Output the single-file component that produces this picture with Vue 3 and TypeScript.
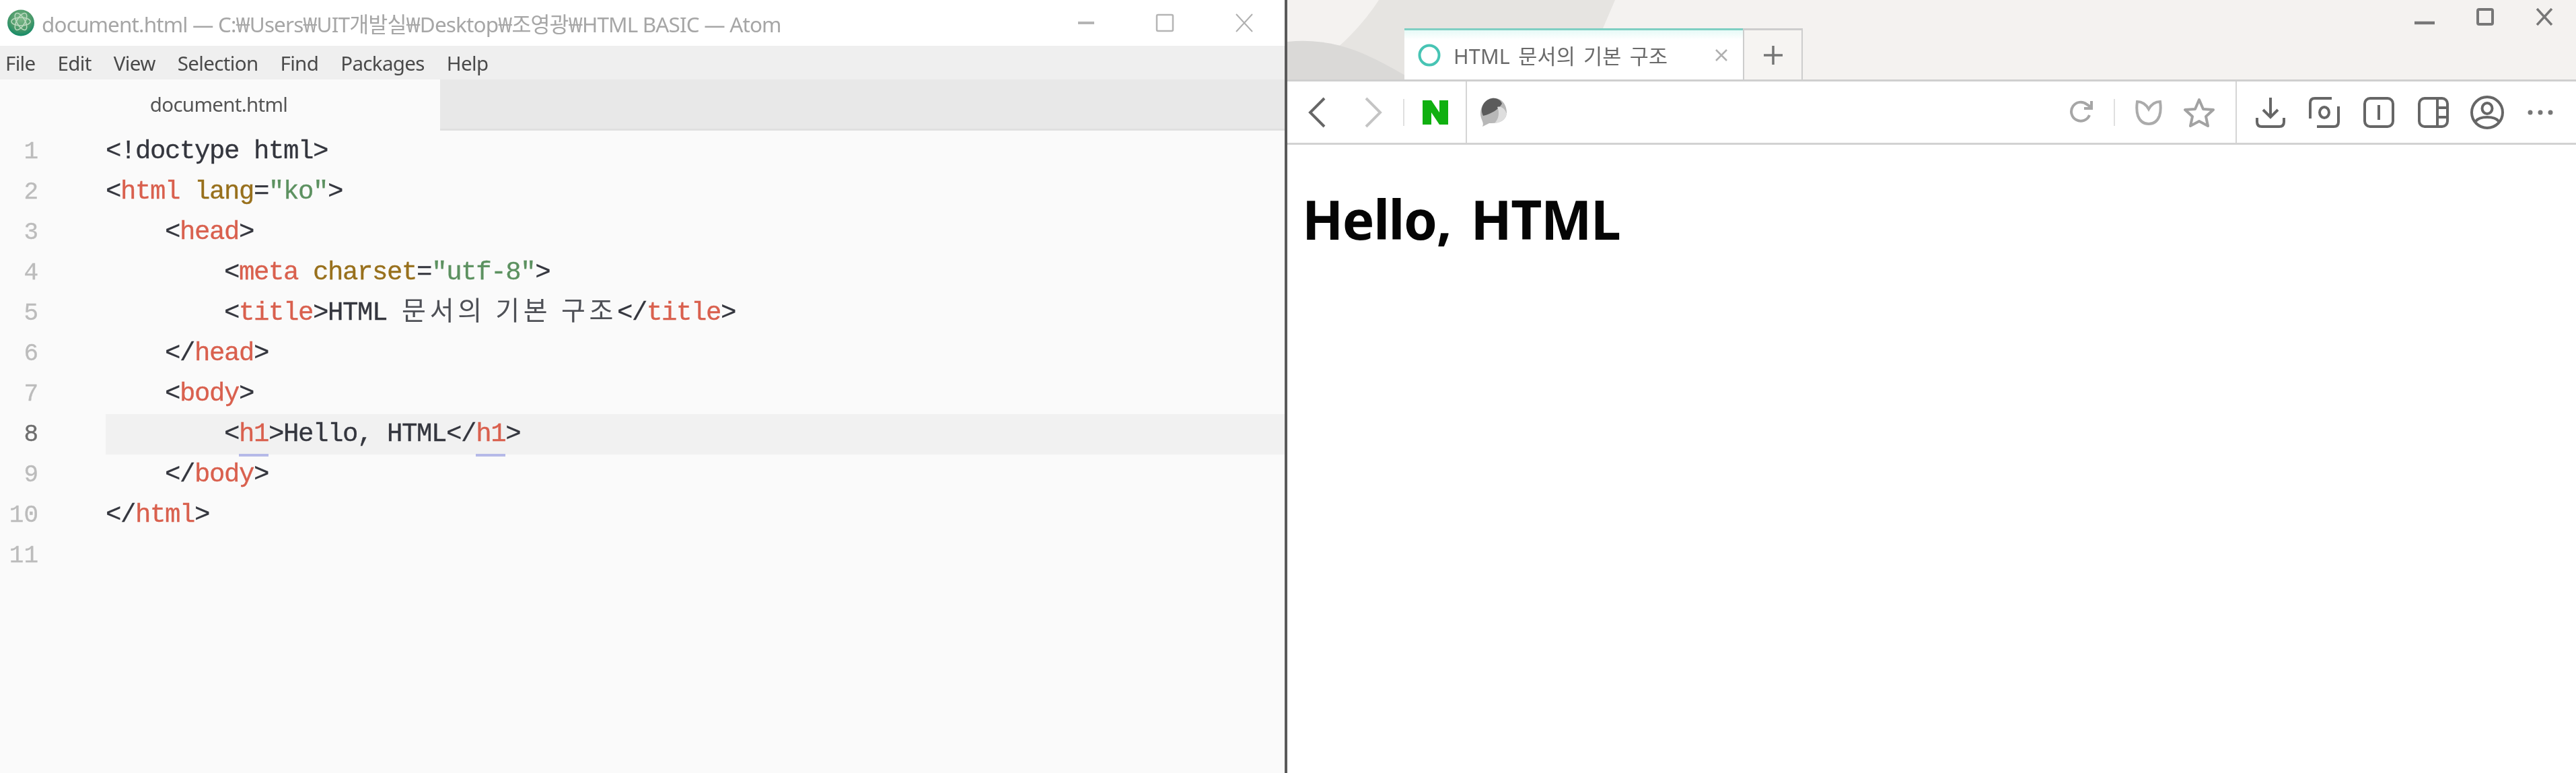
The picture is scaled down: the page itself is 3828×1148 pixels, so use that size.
<script setup lang="ts">
type Tok = { t: string; c?: string };
const tag = (t: string): Tok => ({ t, c: 'tag' });
const attr = (t: string): Tok => ({ t, c: 'attr' });
const str = (t: string): Tok => ({ t, c: 'str' });
const p = (t: string): Tok => ({ t });
const ko = (t: string): Tok => ({ t, c: 'ko' });
const u = (t: string): Tok => ({ t, c: 'tag under' });

const lines: Tok[][] = [
  [p('<!doctype html>')],
  [p('<'), tag('html'), p(' '), attr('lang'), p('='), str('"ko"'), p('>')],
  [p('    <'), tag('head'), p('>')],
  [p('        <'), tag('meta'), p(' '), attr('charset'), p('='), str('"utf-8"'), p('>')],
  [p('        <'), tag('title'), p('>HTML '), ko('문서의 기본 구조'), p('</'), tag('title'), p('>')],
  [p('    </'), tag('head'), p('>')],
  [p('    <'), tag('body'), p('>')],
  [p('        <'), u('h1'), p('>Hello, HTML</'), u('h1'), p('>')],
  [p('    </'), tag('body'), p('>')],
  [p('</'), tag('html'), p('>')],
  [],
];
const menus = ['File', 'Edit', 'View', 'Selection', 'Find', 'Packages', 'Help'];
</script>

<template>
  <div class="screen">
    <section class="atom">
      <header class="a-title">
        <svg class="a-logo" width="42" height="40" viewBox="0 0 42 40">
          <defs>
            <radialGradient id="g" cx="50%" cy="35%" r="65%">
              <stop offset="0" stop-color="#7fb98a" />
              <stop offset="0.6" stop-color="#4d9a6a" />
              <stop offset="1" stop-color="#128a68" />
            </radialGradient>
          </defs>
          <ellipse cx="21" cy="20" rx="20" ry="19.5" fill="url(#g)" />
          <g fill="none" stroke="#b9d8bd" stroke-width="1.6">
            <ellipse cx="21" cy="18" rx="14" ry="6" />
            <ellipse cx="21" cy="18" rx="14" ry="6" transform="rotate(60 21 18)" />
            <ellipse cx="21" cy="18" rx="14" ry="6" transform="rotate(120 21 18)" />
          </g>
        </svg>
        <span class="a-title-text">document.html — C:₩Users₩UIT개발실₩Desktop₩조영광₩HTML BASIC — Atom</span>
        <div class="a-win">
          <svg width="26" height="6" viewBox="0 0 26 6"><path d="M1 3H25" stroke="#b5b5b5" stroke-width="4" /></svg>
          <svg width="28" height="28" viewBox="0 0 28 28"><rect x="2" y="2" width="24" height="24" rx="2" fill="none" stroke="#b5b5b5" stroke-width="2.5" /></svg>
          <svg width="28" height="28" viewBox="0 0 28 28"><path d="M2 1L26 27M26 1L2 27" stroke="#b0b0b0" stroke-width="2" fill="none" /></svg>
        </div>
      </header>
      <nav class="a-menu">
        <span v-for="m in menus" :key="m">{{ m }}</span>
      </nav>
      <div class="a-tabs">
        <div class="a-tab">document.html</div>
      </div>
      <div class="a-editor">
        <div v-for="(line, i) in lines" :key="i" class="row" :class="{ current: i === 7 }">
          <div class="num">{{ i + 1 }}</div>
          <div class="code"><span v-for="(tk, j) in line" :key="j" :class="tk.c">{{ tk.t }}</span></div>
        </div>
      </div>
    </section>

    <section class="browser">
      <div class="b-top">
        <svg class="decor" width="1916" height="118" viewBox="0 0 1916 118" preserveAspectRatio="none">
          <path d="M136 0H487L469 42H175V118H14C70 80 110 40 136 0Z" fill="#e6e4e1" />
          <path d="M0 62C70 55 120 80 175 112V118H0Z" fill="#dad9d7" />
        </svg>
        <div class="b-tab">
          <svg width="36" height="36" viewBox="0 0 36 36"><circle cx="18" cy="18" r="14.5" fill="none" stroke="#47c4b4" stroke-width="4" /></svg>
          <span class="b-tab-text">HTML 문서의 기본 구조</span>
          <svg class="b-tab-x" width="22" height="22" viewBox="0 0 22 22"><path d="M3 3L19 19M19 3L3 19" stroke="#b0b0b0" stroke-width="2.5" /></svg>
        </div>
        <div class="b-new">
          <svg width="32" height="32" viewBox="0 0 32 32"><path d="M16 2V30M2 16H30" stroke="#757575" stroke-width="3.5" /></svg>
        </div>
        <div class="b-win">
          <svg width="30" height="8" viewBox="0 0 30 8"><path d="M0 4H30" stroke="#777" stroke-width="4.5" /></svg>
          <svg width="26" height="26" viewBox="0 0 26 26"><rect x="2" y="2" width="22" height="22" rx="2" fill="none" stroke="#777" stroke-width="4" /></svg>
          <svg width="26" height="26" viewBox="0 0 26 26"><path d="M2 1L24 25M24 1L2 25" stroke="#777" stroke-width="3.5" /></svg>
        </div>
      </div>

      <div class="b-bar">
        <div class="b-nav">
          <svg width="26" height="46" viewBox="0 0 26 46"><path d="M24 2L3 23L24 44" fill="none" stroke="#666" stroke-width="4" /></svg>
          <svg class="fwd" width="26" height="46" viewBox="0 0 26 46"><path d="M2 2L23 23L2 44" fill="none" stroke="#c4c4c4" stroke-width="4" /></svg>
          <i class="sep"></i>
          <svg class="naver" width="38" height="36" viewBox="0 0 38 36"><path d="M0 0H13L25 18V0H38V36H25L13 18V36H0Z" fill="#10b010" /></svg>
        </div>
        <div class="b-addr">
          <svg width="42" height="44" viewBox="0 0 42 44">
            <path d="M18 1C32 -1 40 10 40 22C40 33 30 39 14 38L4 43C6 38 4 36 2 30C-2 18 6 3 18 1Z" fill="#b8b8b8" />
            <path d="M18 1C26 0 31 4 33 9C28 17 18 24 5 27C-1 16 6 3 18 1Z" fill="#5b5b5b" />
            <path d="M26 14C33 12 38 18 40 24C38 34 28 38 22 38C28 32 30 22 26 14Z" fill="#dedede" />
          </svg>
          <div class="b-addr-end">
            <svg width="36" height="36" viewBox="0 0 36 36"><path d="M30 22A14 14 0 1 1 26 6L32 10" fill="none" stroke="#a6a6a6" stroke-width="4" /><path d="M33 1V12H22" fill="none" stroke="#a6a6a6" stroke-width="4" /></svg>
            <i class="sep lt"></i>
            <svg width="40" height="38" viewBox="0 0 40 38"><path d="M3 3C10 3 16 7 20 14C24 7 30 3 37 3C38 10 38 18 36 24C33 32 27 36 20 36C13 36 7 32 4 24C2 18 2 10 3 3Z" fill="none" stroke="#ababab" stroke-width="4" /></svg>
            <svg class="star" width="46" height="44" viewBox="0 0 46 44"><path d="M23 3L29 17L44 18L33 28L36 42L23 35L10 42L13 28L2 18L17 17Z" fill="none" stroke="#a2a2a2" stroke-width="4" stroke-linejoin="round" /></svg>
          </div>
        </div>
        <div class="b-tools">
          <svg width="44" height="46" viewBox="0 0 44 46"><path d="M22 1V29M11 19L22 30L33 19" fill="none" stroke="#666" stroke-width="4" /><path d="M2 31V37Q2 44 9 44H35Q42 44 42 37V31" fill="none" stroke="#666" stroke-width="4" /></svg>
          <svg width="46" height="46" viewBox="0 0 46 46"><path d="M2 32V9Q2 2 9 2H34" fill="none" stroke="#666" stroke-width="4" /><path d="M44 14V37Q44 44 37 44H12" fill="none" stroke="#666" stroke-width="4" /><ellipse cx="23" cy="23" rx="7" ry="8" fill="none" stroke="#666" stroke-width="4" /></svg>
          <svg width="46" height="46" viewBox="0 0 46 46"><rect x="2" y="2" width="42" height="42" rx="8" fill="none" stroke="#666" stroke-width="4" /><path d="M23 12V34" stroke="#666" stroke-width="4" /></svg>
          <svg width="46" height="46" viewBox="0 0 46 46"><rect x="2" y="2" width="42" height="42" rx="8" fill="none" stroke="#666" stroke-width="4" /><path d="M29 2V44M29 16H44M29 30H44" stroke="#666" stroke-width="4" /></svg>
          <svg class="prof" width="50" height="50" viewBox="0 0 50 50"><ellipse cx="25" cy="25" rx="23" ry="23" fill="none" stroke="#666" stroke-width="4" /><ellipse cx="25" cy="19" rx="7.5" ry="8" fill="none" stroke="#666" stroke-width="4" /><path d="M8 38C14 30 36 30 42 38" fill="none" stroke="#666" stroke-width="4" /></svg>
          <svg class="dots" width="38" height="8" viewBox="0 0 38 8"><circle cx="4" cy="4" r="3.5" fill="#777" /><circle cx="19" cy="4" r="3.5" fill="#777" /><circle cx="34" cy="4" r="3.5" fill="#777" /></svg>
        </div>
      </div>

      <main class="b-page">
        <h1>Hello, HTML</h1>
      </main>
    </section>
  </div>
</template>

<style>
html, body { margin: 0; background: #fff; overflow: hidden; }
</style>

<style scoped>
.screen {
  width: 3828px;
  height: 1148px;
  display: flex;
  overflow: hidden;
  filter: blur(0.7px);
  font-family: "Noto Sans", "Noto Sans CJK KR", sans-serif;
}
.atom {
  width: 1909px;
  flex: none;
  display: flex;
  flex-direction: column;
  background: #fafafa;
  border-right: 4px solid #5a5a5a;
}
.a-title {
  height: 68px;
  flex: none;
  background: #fff;
  display: flex;
  align-items: center;
  padding-left: 10px;
  color: #a6a6a6;
}
.a-title-text {
  margin-left: 10px;
  font-size: 31.5px;
  letter-spacing: -0.87px;
  white-space: nowrap;
  flex: 1;
}
.a-win {
  display: flex;
  align-items: center;
  gap: 90px;
  margin-right: 46px;
}
.a-menu {
  height: 50px;
  flex: none;
  background: #efefef;
  display: flex;
  align-items: center;
  gap: 33px;
  padding-left: 8px;
  font-size: 29.5px;
  letter-spacing: -0.65px;
  color: #4a4a4a;
}
.a-tabs {
  height: 76px;
  flex: none;
  display: flex;
  background: #e8e8e8;
  border-bottom: 3px solid #e0e0e0;
  box-sizing: border-box;
}
.a-tab {
  width: 650px;
  height: 76px;
  background: #fafafa;
  text-align: center;
  line-height: 74px;
  font-size: 29.5px;
  letter-spacing: -0.7px;
  color: #555;
  padding-right: 4px;
}
.a-editor {
  flex: 1;
  padding-top: 1px;
}
.row {
  height: 60px;
  display: flex;
  align-items: center;
  font-family: "Liberation Mono", "Noto Sans CJK KR", monospace;
  font-size: 39px;
  letter-spacing: -1.4px;
  color: #34363e;
  -webkit-text-stroke: 0.35px currentColor;
}
.num {
  width: 57px;
  flex: none;
  text-align: right;
  color: #bcbcbc;
  font-size: 36px;
  letter-spacing: 0;
}
.code {
  flex: 1;
  align-self: stretch;
  margin-left: 100px;
  line-height: 60px;
  white-space: pre;
}
.current .num { color: #6e6e6e; }
.current .code { background: #f1f1f1; }
.tag { color: #d9604e; }
.attr { color: #98701c; }
.str { color: #5c9160; }
.ko {
  font-family: "Noto Sans CJK KR", sans-serif;
  font-size: 39px;
  line-height: 0;
  letter-spacing: 5.7px;
  color: #4e5056;
  -webkit-text-stroke: 0;
}
.under { position: relative; }
.under::after {
  content: "";
  position: absolute;
  left: 0;
  right: 0;
  bottom: -11px;
  height: 4px;
  background: #b5b9e8;
}
.browser {
  flex: 1;
  display: flex;
  flex-direction: column;
  background: #fff;
}
.b-top {
  position: relative;
  height: 121px;
  flex: none;
  box-sizing: border-box;
  background: #f4f2f0;
  border-bottom: 3px solid #cfcfcf;
  display: flex;
  align-items: flex-end;
  padding-left: 174px;
}
.decor { position: absolute; left: 0; top: 0; }
.b-tab {
  position: relative;
  width: 503px;
  height: 76px;
  box-sizing: border-box;
  background: linear-gradient(#e6faf7, #fff 14px);
  border-top: 3px solid #7fcfc3;
  display: flex;
  align-items: center;
  padding-left: 19px;
  color: #6a6a6a;
  font-size: 30.5px;
}
.b-tab-text { margin-left: 18px; flex: 1; white-space: nowrap; word-spacing: 4px; letter-spacing: 0.2px; }
.b-tab-x { margin-right: 21px; }
.b-new {
  position: relative;
  width: 89px;
  height: 76px;
  box-sizing: border-box;
  border: 2px solid #cdcdcd;
  border-width: 3px 2px 0 2px;
  background: #f6f4f2;
  display: flex;
  align-items: center;
  justify-content: center;
}
.b-win {
  position: absolute;
  top: 12px;
  right: 34px;
  display: flex;
  align-items: center;
  gap: 62px;
}
.b-win svg:first-child { margin-top: 18px; }
.b-bar {
  height: 94px;
  flex: none;
  box-sizing: border-box;
  display: flex;
  border-bottom: 3px solid #d2d2d2;
}
.b-nav {
  width: 267px;
  flex: none;
  box-sizing: border-box;
  border-right: 2px solid #d5d5d5;
  display: flex;
  align-items: center;
  padding-left: 31px;
}
.fwd { margin-left: 58px; }
.sep {
  display: block;
  width: 2px;
  height: 40px;
  background: #e0e0e0;
  margin-left: 31px;
}
.naver { margin-left: 27px; }
.b-addr {
  flex: 1;
  box-sizing: border-box;
  border-right: 2px solid #d5d5d5;
  display: flex;
  align-items: center;
  padding-left: 19px;
}
.b-addr-end {
  margin-left: auto;
  display: flex;
  align-items: center;
  padding-right: 31px;
}
.sep.lt { margin: 0 30px; }
.star { margin-left: 32px; }
.b-tools {
  width: 504px;
  flex: none;
  box-sizing: border-box;
  display: flex;
  align-items: center;
  gap: 35px;
  padding-left: 28px;
}
.prof { margin-left: -3px; }
.b-page {
  flex: 1;
  padding-left: 22px;
}
h1 {
  margin: 55px 0 0;
  font-family: "Noto Sans", sans-serif;
  font-size: 80px;
  line-height: 110px;
  font-weight: 700;
  letter-spacing: -1.4px;
  color: #050505;
  word-spacing: 10px;
  white-space: nowrap;
}
</style>
